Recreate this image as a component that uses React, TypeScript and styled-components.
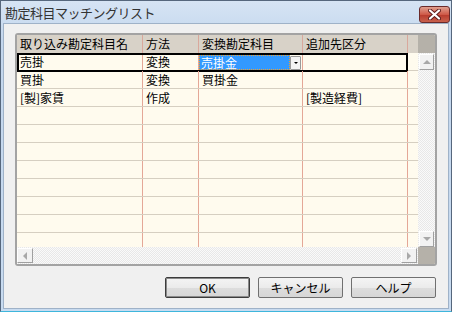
import styled, { createGlobalStyle } from "styled-components";

const GlobalStyle = createGlobalStyle`
  html, body {
    margin: 0;
    padding: 0;
    background: #000;
  }
  body {
    font-family: "Noto Sans CJK JP", "Liberation Sans", sans-serif;
    font-size: 12px;
  }
`;

const Window = styled.div`
  width: 452px;
  height: 312px;
  box-sizing: border-box;
  display: flex;
  flex-direction: column;
  background: linear-gradient(#d6e4f4, #c3d6ed 40px, #c8dbf0);
  border: 1px solid #56677d;
  border-bottom-color: #3fb6dc;
  overflow: hidden;
`;

const TitleBar = styled.div`
  height: 22px;
  flex-shrink: 0;
  display: flex;
  align-items: center;
  justify-content: space-between;
  padding: 0 1px 0 4px;
`;

const Title = styled.span`
  font-size: 13px;
  color: #333;
  letter-spacing: -0.5px;
`;

const CloseButton = styled.div`
  width: 31px;
  height: 17px;
  margin-top: 5px;
  box-sizing: border-box;
  border: 1px solid #6a2a2a;
  border-radius: 3px;
  background: linear-gradient(#e0a090, #cf5a48 50%, #b83a2c 51%, #c8604c);
  display: flex;
  align-items: center;
  justify-content: center;
`;

const Client = styled.div`
  flex: 1;
  margin: 0 2px 2px;
  background: #f0f0f0;
  border: 1px solid #9fb2c8;
  padding: 9px 11px 10px;
  display: flex;
  flex-direction: column;
  gap: 11px;
`;

const Grid = styled.div`
  height: 233px;
  box-sizing: border-box;
  border: 2px solid #a3a3a3;
  border-radius: 3px;
  display: grid;
  grid-template-columns: 401px 17px;
  grid-template-rows: 18px 194px 17px;
  background: #fffbee;
  overflow: hidden;
`;

const HeaderRow = styled.div`
  display: flex;
  background: #d8d2c8;
`;

const HeaderCell = styled.div<{ $w: number; $line?: boolean }>`
  width: ${(p) => p.$w}px;
  box-sizing: border-box;
  padding-left: 3px;
  line-height: 18px;
  color: #000;
  white-space: nowrap;
  border-right: ${(p) => (p.$line ? "1px solid #d9a89c" : "none")};
`;

const ScrollHead = styled.div`
  background: #b5b1a9;
`;

const Body = styled.div`
  overflow: hidden;
`;

const Row = styled.div<{ $selected?: boolean }>`
  position: relative;
  display: flex;
  height: 18px;
  box-sizing: border-box;
  border-bottom: 1px solid #d6cfc1;

  &::after {
    content: "";
    display: ${(p) => (p.$selected ? "block" : "none")};
    position: absolute;
    left: 0;
    top: 0;
    width: 391px;
    height: 19px;
    box-sizing: border-box;
    border: 2px solid #000;
    pointer-events: none;
  }
`;

const Cell = styled.div<{ $w: number; $line?: boolean }>`
  width: ${(p) => p.$w}px;
  box-sizing: border-box;
  padding-left: 3px;
  line-height: 17px;
  white-space: nowrap;
  color: #000;
  border-right: ${(p) => (p.$line ? "1px solid #e4a797" : "none")};
`;

const EditCell = styled.div<{ $w: number }>`
  width: ${(p) => p.$w}px;
  box-sizing: border-box;
  display: flex;
  align-items: center;
  padding: 2px 1px 0 0;
  border-right: 1px solid #e4a797;
`;

const Highlight = styled.div`
  flex: 1;
  height: 15px;
  box-sizing: border-box;
  background: #3399ff;
  color: #fff;
  line-height: 13px;
  padding-left: 1px;
  border: 1px dotted #f0a030;
`;

const DropButton = styled.div`
  width: 11px;
  height: 14px;
  box-sizing: border-box;
  background: #f4f4f4;
  border: 1px solid #9a9a9a;
  border-radius: 1px;
  display: flex;
  align-items: center;
  justify-content: center;

  &::before {
    content: "";
    border-left: 2px solid transparent;
    border-right: 2px solid transparent;
    border-top: 2px solid #000;
  }
`;

const Track = styled.div<{ $vertical?: boolean }>`
  display: flex;
  flex-direction: ${(p) => (p.$vertical ? "column" : "row")};
  justify-content: space-between;
  background-color: #fafafa;
  background-image: repeating-conic-gradient(#e8e8e8 0 25%, #fafafa 0 50%);
  background-size: 2px 2px;
`;

const ArrowButton = styled.div<{ $dir: "up" | "down" | "left" | "right" }>`
  width: ${(p) => (p.$dir === "up" || p.$dir === "down" ? "15px" : "16px")};
  height: ${(p) => (p.$dir === "up" || p.$dir === "down" ? "16px" : "15px")};
  margin: 1px 1px 0 ${(p) => (p.$dir === "up" || p.$dir === "down" ? "1px" : "0")};
  box-sizing: border-box;
  background: #f2f2f2;
  border: 1px solid;
  border-color: #fff #a0a0a0 #a0a0a0 #fff;
  display: flex;
  align-items: center;
  justify-content: center;

  &::before {
    content: "";
    border: 4px solid transparent;
    ${(p) =>
      p.$dir === "up"
        ? "border-bottom-color: #a8a8a8; border-top-width: 0; border-bottom-width: 4px;"
        : p.$dir === "down"
        ? "border-top-color: #a8a8a8; border-bottom-width: 0; border-top-width: 4px;"
        : p.$dir === "left"
        ? "border-right-color: #a8a8a8; border-left-width: 0; border-right-width: 4px;"
        : "border-left-color: #a8a8a8; border-right-width: 0; border-left-width: 4px;"}
  }
`;

const Corner = styled.div`
  background: #b5b1a9;
`;

const ButtonRow = styled.div`
  display: flex;
  justify-content: flex-end;
  gap: 8px;
  padding-right: 1px;
`;

const Button = styled.div<{ $default?: boolean }>`
  width: 85px;
  height: 21px;
  box-sizing: border-box;
  border: 1px solid ${(p) => (p.$default ? "#3c3c3c" : "#707070")};
  box-shadow: ${(p) => (p.$default ? "inset 0 0 0 1px #8a8a8a" : "none")};
  border-radius: 2px;
  background: linear-gradient(#f4f4f4, #ebebeb 50%, #dddddd 51%, #d6d6d6);
  display: flex;
  align-items: center;
  justify-content: center;
  color: #000;
  font-size: 12px;
`;

const cols = [126, 56, 104, 105];
const headers = ["取り込み勘定科目名", "方法", "変換勘定科目", "追加先区分"];
const rows: string[][] = [
  ["売掛", "変換", "売掛金", ""],
  ["買掛", "変換", "買掛金", ""],
  ["[製]家賃", "作成", "", "[製造経費]"],
  ...Array.from({ length: 8 }, () => ["", "", "", ""]),
];

const App = () => {
  return (
    <>
      <GlobalStyle />
      <Window>
        <TitleBar>
          <Title>勘定科目マッチングリスト</Title>
          <CloseButton>
            <svg width="13" height="11" viewBox="0 0 13 11">
              <path
                d="M2 1.5 L11 9.5 M11 1.5 L2 9.5"
                stroke="#5a1a1a"
                strokeWidth="4"
                strokeLinecap="round"
              />
              <path
                d="M2 1.5 L11 9.5 M11 1.5 L2 9.5"
                stroke="#fff"
                strokeWidth="2.2"
                strokeLinecap="round"
              />
            </svg>
          </CloseButton>
        </TitleBar>
        <Client>
          <Grid>
            <HeaderRow>
              {headers.map((h, i) => (
                <HeaderCell key={h} $w={cols[i]} $line>
                  {h}
                </HeaderCell>
              ))}
              <HeaderCell $w={10} />
            </HeaderRow>
            <ScrollHead />
            <Body>
              {rows.map((r, ri) => (
                <Row key={ri} $selected={ri === 0}>
                  {r.map((c, ci) =>
                    ri === 0 && ci === 2 ? (
                      <EditCell key={ci} $w={cols[ci]}>
                        <Highlight>{c}</Highlight>
                        <DropButton />
                      </EditCell>
                    ) : (
                      <Cell key={ci} $w={cols[ci]} $line>
                        {c}
                      </Cell>
                    )
                  )}
                  <Cell $w={10} />
                </Row>
              ))}
            </Body>
            <Track $vertical>
              <ArrowButton $dir="up" />
              <ArrowButton $dir="down" />
            </Track>
            <Track>
              <ArrowButton $dir="left" />
              <ArrowButton $dir="right" />
            </Track>
            <Corner />
          </Grid>
          <ButtonRow>
            <Button $default>OK</Button>
            <Button>キャンセル</Button>
            <Button>ヘルプ</Button>
          </ButtonRow>
        </Client>
      </Window>
    </>
  );
};

export default App;
